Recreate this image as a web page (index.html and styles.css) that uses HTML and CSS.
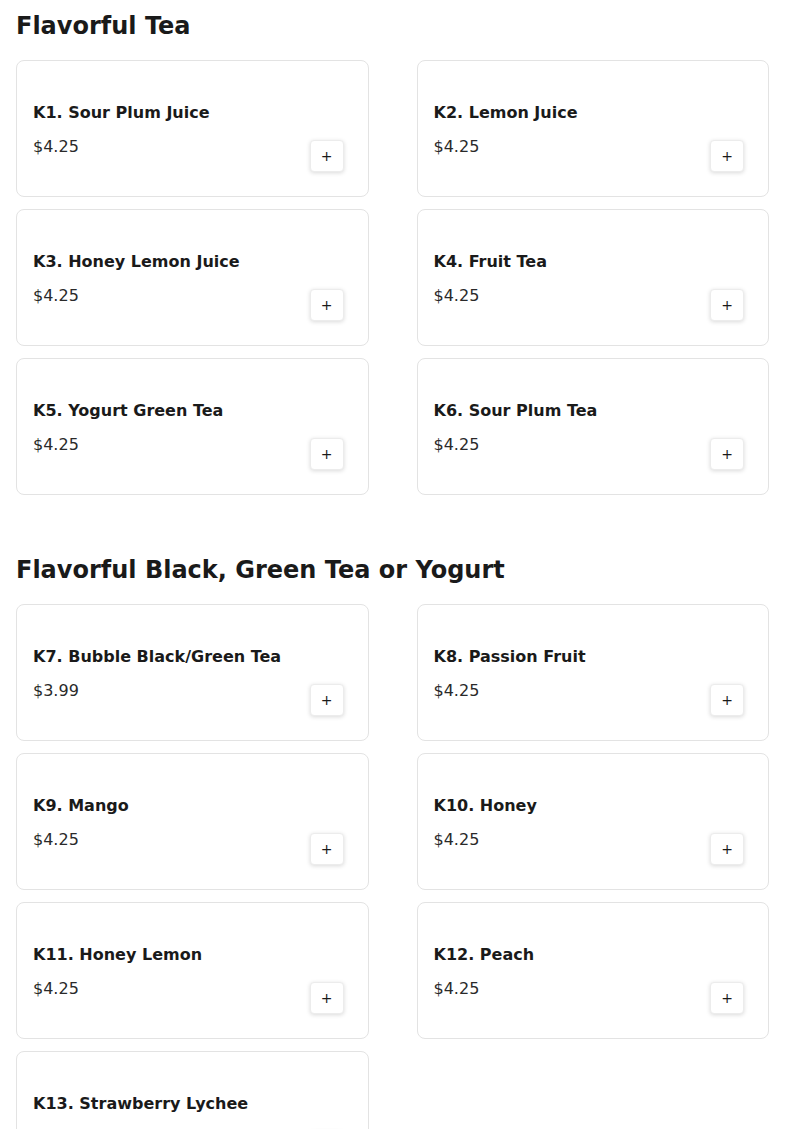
FILE: index.html
```html
<!DOCTYPE html>
<html>
<head>
<meta charset="utf-8">
<link rel="stylesheet" href="styles.css">
</head>
<body>
<section class="section">
  <h2 class="heading">Flavorful Tea</h2>
  <div class="grid">
    <div class="card"><div class="info"><div class="name">K1. Sour Plum Juice</div><div class="price">$4.25</div></div><button class="add">+</button></div>
    <div class="card"><div class="info"><div class="name">K2. Lemon Juice</div><div class="price">$4.25</div></div><button class="add">+</button></div>
    <div class="card"><div class="info"><div class="name">K3. Honey Lemon Juice</div><div class="price">$4.25</div></div><button class="add">+</button></div>
    <div class="card"><div class="info"><div class="name">K4. Fruit Tea</div><div class="price">$4.25</div></div><button class="add">+</button></div>
    <div class="card"><div class="info"><div class="name">K5. Yogurt Green Tea</div><div class="price">$4.25</div></div><button class="add">+</button></div>
    <div class="card"><div class="info"><div class="name">K6. Sour Plum Tea</div><div class="price">$4.25</div></div><button class="add">+</button></div>
  </div>
</section>
<section class="section">
  <h2 class="heading">Flavorful Black, Green Tea or Yogurt</h2>
  <div class="grid">
    <div class="card"><div class="info"><div class="name">K7. Bubble Black/Green Tea</div><div class="price">$3.99</div></div><button class="add">+</button></div>
    <div class="card"><div class="info"><div class="name">K8. Passion Fruit</div><div class="price">$4.25</div></div><button class="add">+</button></div>
    <div class="card"><div class="info"><div class="name">K9. Mango</div><div class="price">$4.25</div></div><button class="add">+</button></div>
    <div class="card"><div class="info"><div class="name">K10. Honey</div><div class="price">$4.25</div></div><button class="add">+</button></div>
    <div class="card"><div class="info"><div class="name">K11. Honey Lemon</div><div class="price">$4.25</div></div><button class="add">+</button></div>
    <div class="card"><div class="info"><div class="name">K12. Peach</div><div class="price">$4.25</div></div><button class="add">+</button></div>
    <div class="card"><div class="info"><div class="name">K13. Strawberry Lychee</div><div class="price">$4.25</div></div><button class="add">+</button></div>
  </div>
</section>
</body>
</html>
```
FILE: styles.css
```css
html, body {
  margin: 0;
  padding: 0;
  background: #ffffff;
}
body {
  font-family: "DejaVu Sans", sans-serif;
  color: #1a1a1a;
  padding: 12px 16px 0 16px;
}
.section {
  margin-bottom: 61px;
}
.heading {
  margin: 0 0 20px 0;
  font-size: 24px;
  line-height: 28px;
  font-weight: bold;
  color: #1a1a1a;
}
.grid {
  display: grid;
  grid-template-columns: 1fr 1fr;
  column-gap: 48px;
  row-gap: 12px;
}
.card {
  border: 1px solid #e3e3e3;
  border-radius: 8px;
  padding: 42px 24px 24px 16px;
  display: flex;
  justify-content: space-between;
  align-items: flex-end;
  background: #fff;
}
.info {
  padding-bottom: 15px;
}
.name {
  font-size: 16px;
  line-height: 20px;
  font-weight: bold;
  color: #1a1a1a;
}
.price {
  margin-top: 14px;
  font-size: 16px;
  line-height: 20px;
  color: #2a2a2a;
}
.add {
  width: 34px;
  height: 32px;
  padding: 0;
  border: 1px solid #ececec;
  border-radius: 4px;
  background: #fff;
  box-shadow: 0 1px 4px rgba(0,0,0,0.15);
  font-family: "DejaVu Sans", sans-serif;
  font-size: 14px;
  line-height: 31px;
  color: #1a1a1a;
  cursor: pointer;
}
```
